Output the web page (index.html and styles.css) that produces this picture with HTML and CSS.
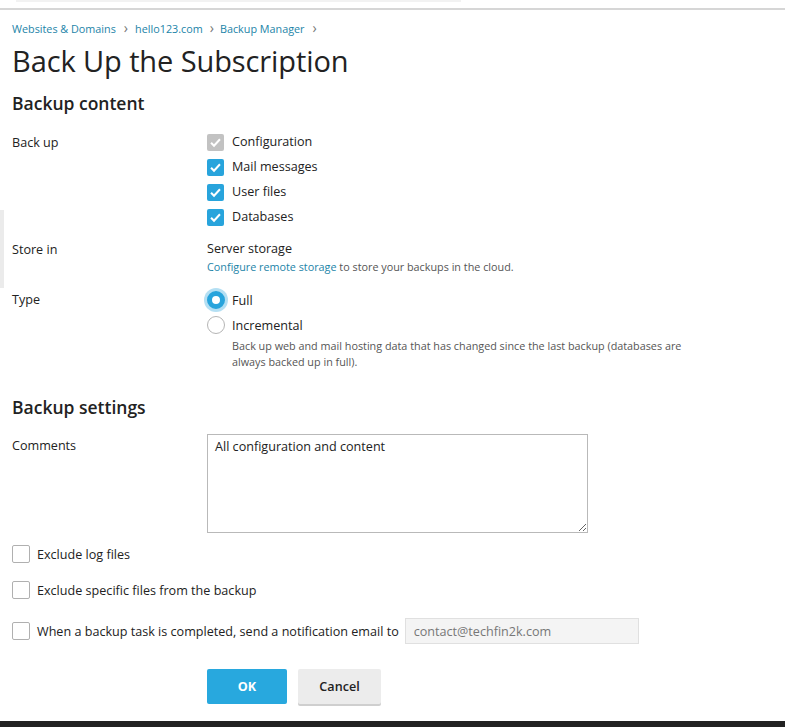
FILE: index.html
```html
<!DOCTYPE html>
<html>
<head>
<meta charset="utf-8">
<link rel="stylesheet" href="styles.css">
</head>
<body>
<div class="topbar"><div class="topfaint"></div></div>
<div class="sidetab"></div>
<main class="page">
  <nav class="crumbs">
    <a href="#">Websites &amp; Domains</a><span class="sep">&#8250;</span>
    <a href="#">hello123.com</a><span class="sep">&#8250;</span>
    <a href="#">Backup Manager</a><span class="sep">&#8250;</span>
  </nav>
  <h1 class="title">Back Up the Subscription</h1>

  <h2 class="section">Backup content</h2>
  <div class="row row-backup">
    <div class="label">Back up</div>
    <div class="field checks">
      <label class="chk"><span class="box disabled"><svg viewBox="0 0 16 16"><path d="M3.8 8.2l2.8 2.8L12.2 5" fill="none" stroke="#fff" stroke-width="1.9"/></svg></span>Configuration</label>
      <label class="chk"><span class="box on"><svg viewBox="0 0 16 16"><path d="M3.8 8.2l2.8 2.8L12.2 5" fill="none" stroke="#fff" stroke-width="1.9"/></svg></span>Mail messages</label>
      <label class="chk"><span class="box on"><svg viewBox="0 0 16 16"><path d="M3.8 8.2l2.8 2.8L12.2 5" fill="none" stroke="#fff" stroke-width="1.9"/></svg></span>User files</label>
      <label class="chk"><span class="box on"><svg viewBox="0 0 16 16"><path d="M3.8 8.2l2.8 2.8L12.2 5" fill="none" stroke="#fff" stroke-width="1.9"/></svg></span>Databases</label>
    </div>
  </div>
  <div class="row row-store">
    <div class="label">Store in</div>
    <div class="field">
      <div class="value">Server storage</div>
      <div class="hint"><a href="#">Configure remote storage</a> to store your backups in the cloud.</div>
    </div>
  </div>
  <div class="row row-type">
    <div class="label">Type</div>
    <div class="field radios">
      <label class="rad"><span class="circle on"></span>Full</label>
      <label class="rad"><span class="circle"></span>Incremental</label>
      <div class="hint desc">Back up web and mail hosting data that has changed since the last backup (databases are always backed up in full).</div>
    </div>
  </div>

  <h2 class="section section2">Backup settings</h2>
  <div class="row row-comments">
    <div class="label">Comments</div>
    <div class="field"><textarea class="comments">All configuration and content</textarea></div>
  </div>

  <label class="chk2 first"><span class="box2"></span>Exclude log files</label>
  <label class="chk2"><span class="box2"></span>Exclude specific files from the backup</label>
  <div class="chk2 notify"><span class="box2"></span><span class="ntext">When a backup task is completed, send a notification email to</span><input class="email" type="text" value="contact@techfin2k.com"></div>

  <div class="buttons">
    <button class="btn ok">OK</button>
    <button class="btn cancel">Cancel</button>
  </div>
</main>
<div class="bottombar"></div>
</body>
</html>
```

FILE: styles.css
```css
html, body {
  margin: 0;
  padding: 0;
  background: #fff;
}
body {
  font-family: "Open Sans", "DejaVu Sans", sans-serif;
  color: #222;
  font-size: 12.6px;
  width: 785px;
  height: 727px;
  overflow: hidden;
  position: relative;
}
.topbar {
  height: 8px;
  border-bottom: 2px solid #d6d6d6;
  position: relative;
}
.topfaint {
  position: absolute;
  left: 16px;
  top: 0;
  width: 445px;
  height: 2px;
  background: #f2f2f2;
}
.sidetab {
  position: absolute;
  left: 0;
  top: 210px;
  width: 4px;
  height: 78px;
  background: #ebebeb;
}
.page {
  padding: 0 12px;
}
.crumbs {
  margin-top: 10px;
  height: 18px;
  font-size: 10.8px;
  line-height: 18px;
  display: flex;
  align-items: center;
}
.crumbs a {
  color: #1c84a8;
  text-decoration: none;
}
.crumbs .sep {
  color: #777;
  font-size: 14px;
  margin: 0 7px 0 8px;
  position: relative;
  top: -1px;
}
.crumbs .sep:nth-of-type(2) {
  margin: 0 6px 0 7px;
}
.title {
  font-size: 29px;
  font-weight: 400;
  margin: 3px 0 0 0;
  line-height: 40px;
  color: #222;
  letter-spacing: -0.1px;
}
.section {
  font-size: 17.5px;
  font-weight: 600;
  margin: 9px 0 0 0;
  line-height: 26px;
  color: #222;
}
.section2 {
  margin-top: 24px;
}
.row {
  display: grid;
  grid-template-columns: 195px 1fr;
}
.label {
  line-height: 20px;
}
.row-backup { margin-top: 16px; }
.row-backup .label { padding-top: 1px; }
.checks {
  display: flex;
  flex-direction: column;
  gap: 5px;
}
.chk {
  display: flex;
  align-items: center;
  height: 20px;
  line-height: 20px;
}
.box {
  width: 17px;
  height: 17px;
  border-radius: 2px;
  margin-right: 8px;
  display: inline-flex;
  box-sizing: border-box;
}
.box svg { width: 17px; height: 17px; }
.box.on { background: #28a4dc; }
.box.disabled { background: #c2c2c2; }

.row-store { margin-top: 12px; }
.row-store .label { padding-top: 1px; }
.value { line-height: 20px; }
.hint {
  font-size: 10.8px;
  color: #555;
  line-height: 16px;
}
.hint a {
  color: #1c84a8;
  text-decoration: none;
}
.row-type { margin-top: 15px; }
.radios {
  display: flex;
  flex-direction: column;
  gap: 5px;
}
.rad {
  display: flex;
  align-items: center;
  height: 20px;
}
.circle {
  width: 18px;
  height: 18px;
  border-radius: 50%;
  border: 1px solid #b5b5b5;
  box-sizing: border-box;
  margin-right: 7px;
  background: #fff;
}
.circle.on {
  border: 5px solid #28a4dc;
  background: #fff;
  box-shadow: 0 0 0 3px rgba(40, 164, 220, 0.35);
}
.desc {
  margin-left: 25px;
  margin-top: -2px;
  max-width: 470px;
  color: #555;
}
.row-comments { margin-top: 14px; }
.row-comments .label { padding-top: 2px; }
.comments {
  width: 381px;
  height: 99px;
  box-sizing: border-box;
  border: 1px solid #b9b9b9;
  font-family: "Open Sans", "DejaVu Sans", sans-serif;
  font-size: 12.6px;
  color: #222;
  padding: 3px 7px;
  margin: 0;
  display: block;
  resize: both;
}
.chk2 {
  display: flex;
  align-items: center;
  height: 20px;
  margin-top: 16px;
}
.chk2.first { margin-top: 11px; }
.box2 {
  width: 18px;
  height: 18px;
  border: 1px solid #b0b0b0;
  border-radius: 2px;
  box-sizing: border-box;
  margin-right: 7px;
  background: #fff;
}
.notify {
  margin-top: 21px;
}
.ntext { margin-right: 6px; }
.email {
  width: 234px;
  height: 26px;
  box-sizing: border-box;
  border: 1px solid #e0e0e0;
  background: #f4f4f4;
  color: #777;
  font-family: "Open Sans", "DejaVu Sans", sans-serif;
  font-size: 12.6px;
  padding: 0 8px;
}
.buttons {
  margin-top: 28px;
  padding-left: 195px;
  display: flex;
  gap: 11px;
}
.btn {
  height: 35px;
  border: none;
  border-radius: 2px;
  font-family: "Open Sans", "DejaVu Sans", sans-serif;
  font-size: 12.6px;
  padding: 0;
}
.ok {
  width: 80px;
  background: #28a8de;
  color: #fff;
  font-weight: 700;
}
.cancel {
  width: 83px;
  background: #ececec;
  color: #222;
  font-weight: 600;
  box-shadow: 0 2px 0 #cfcfcf;
}
.bottombar {
  position: absolute;
  left: 0;
  right: 0;
  bottom: 0;
  height: 6px;
  background: #222;
}
```
